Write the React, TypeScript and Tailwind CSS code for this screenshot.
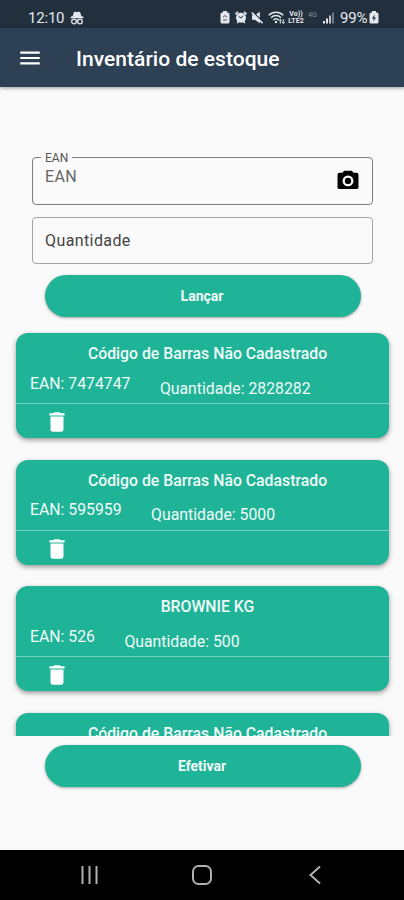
import type { ReactNode } from "react";
import { MdDelete, MdMenu } from "react-icons/md";

interface StockItem {
  name: string;
  ean?: string;
  quantity?: string;
}

const ITEMS: StockItem[] = [
  { name: "Código de Barras Não Cadastrado", ean: "7474747", quantity: "2828282" },
  { name: "Código de Barras Não Cadastrado", ean: "595959", quantity: "5000" },
  { name: "BROWNIE KG", ean: "526", quantity: "500" },
  { name: "Código de Barras Não Cadastrado" },
];

function IncognitoIcon() {
  return (
    <svg width="14" height="14" viewBox="0 0 14 14" fill="currentColor">
      <path d="M3.8 1.4c.3-.8 1-.9 1.7-.6.9.4 2.1.4 3 0 .7-.3 1.400-.2 1.700.6l1.100 3.600L13.500 6v1.200H.5V6l2.200-1z" />
      <g fill="none" stroke="currentColor" strokeWidth="1.300">
        <circle cx="4" cy="10.500" r="2.300" />
        <circle cx="10" cy="10.500" r="2.300" />
        <path d="M6.100 10c.5-.5 1.300-.5 1.800 0" />
      </g>
    </svg>
  );
}

function BatteryIcon() {
  return (
    <svg width="10" height="13" viewBox="0 0 10 13">
      <path d="M3 0h4v1.400h1A1.500 1.500 0 0 1 9.500 2.900v8.200A1.500 1.500 0 0 1 8 12.600H2A1.500 1.500 0 0 1 .5 11.100V2.900A1.500 1.500 0 0 1 2 1.400h1z" fill="currentColor" />
      <path d="M5.600 3.600 3 7.400h1.700L4.400 10.400 7 6.600H5.300z" fill="#22303e" />
    </svg>
  );
}

function SaverIcon() {
  return (
    <svg width="10" height="13" viewBox="0 0 10 13">
      <path d="M3 0h4v1.400h1A1.500 1.500 0 0 1 9.500 2.900v8.200A1.500 1.500 0 0 1 8 12.600H2A1.500 1.500 0 0 1 .5 11.100V2.900A1.500 1.500 0 0 1 2 1.400h1z" fill="currentColor" />
      <path d="M3 6.300 5 4.500l2 1.800M3.200 9h3.600" fill="none" stroke="#22303e" strokeWidth=".8" />
    </svg>
  );
}

function AlarmIcon() {
  return (
    <svg width="12" height="13" viewBox="0 0 12 13">
      <path d="M.5 3.300 3 .9M11.500 3.300 9 .9M2.200 12l1.300-1.500M9.800 12l-1.300-1.500" stroke="currentColor" strokeWidth="1.800" />
      <circle cx="6" cy="6.700" r="5" fill="currentColor" />
      <path d="M3.600 5.200 6 7.200l2-2.500" fill="none" stroke="#22303e" strokeWidth="1" />
    </svg>
  );
}

function MuteIcon() {
  return (
    <svg width="13" height="13" viewBox="0 0 13 13">
      <path d="M1 4.200h2.800L8.800.8v11.400L3.800 8.800H1z" fill="currentColor" />
      <path d="M1.600.7 12.200 11" stroke="#22303e" strokeWidth="1.200" />
      <path d="M.8 1.600 11.600 12.200" stroke="currentColor" strokeWidth="1.600" />
    </svg>
  );
}

function WifiIcon() {
  return (
    <svg width="17" height="13" viewBox="0 0 17 13" fill="none" stroke="currentColor" strokeWidth="1.500">
      <path d="M.8 4.300c4-4 10.400-4 14.400 0M3 6.700c2.800-2.800 7.200-2.800 10 0M5.300 9c1.600-1.500 3.800-1.500 5.400 0" />
      <circle cx="8" cy="11" r="1.200" fill="currentColor" stroke="none" />
      <path d="M12.300 12.500V8.500M11 9.800l1.300-1.500 1.300 1.500M15.300 8.200v4M14 11l1.300 1.400L16.600 11" strokeWidth="1" />
    </svg>
  );
}

function SignalIcon() {
  return (
    <svg width="11" height="12" viewBox="0 0 11 12" fill="currentColor">
      <path d="M0 9h2v2.500H0zM3 6.500h2v5H3z" />
      <path d="M6 3.500h2v8H6z" opacity=".8" />
      <path d="M9 .5h2v11H9z" opacity=".4" />
    </svg>
  );
}

function CameraIcon() {
  return (
    <svg width="22" height="20" viewBox="0 0 22 20">
      <path d="M7.200.8h7.600l1.800 2h3A1.900 1.900 0 0 1 21.500 4.700v12.500a1.900 1.900 0 0 1-1.900 1.900H2.400a1.900 1.900 0 0 1-1.900-1.900V4.700a1.900 1.900 0 0 1 1.900-1.900h3z" fill="#050505" />
      <circle cx="11" cy="10.900" r="4.300" fill="none" stroke="#fafafa" strokeWidth="2.300" />
    </svg>
  );
}

function StatusBar() {
  return (
    <div className="flex h-7 shrink-0 items-center bg-[#22303e] pt-[7px] pl-7 text-[#e4e8ec]">
      <span className="w-[42px] text-[15px] leading-5 tracking-[-0.2px]">12:10</span>
      <IncognitoIcon />
      <div className="ml-[136px] flex items-center">
        <SaverIcon />
        <span className="ml-[5px]"><AlarmIcon /></span>
        <span className="ml-1"><MuteIcon /></span>
        <span className="ml-[4px]"><WifiIcon /></span>
        <span className="ml-[3px] flex w-4 flex-col items-center text-[7px] leading-[7px] font-bold">
          <span>Vo))</span>
          <span>LTE2</span>
        </span>
        <span className="ml-[4px] mb-[5px] w-[11px] text-[7px] leading-2 opacity-50">4G</span>
        <span className="ml-[4px]"><SignalIcon /></span>
      </div>
      <span className="ml-[6px] w-[29px] text-[15px] leading-5 tracking-[-0.2px]">99%</span>
      <BatteryIcon />
    </div>
  );
}

function Header() {
  return (
    <header className="z-10 flex h-[59px] shrink-0 items-center bg-[#2e4053] pt-px pl-[17px] text-white shadow-[0_1px_4px_rgba(0,0,0,0.4)]">
      <MdMenu className="size-[26px]" />
      <h1 className="ml-[33px] pt-[3px] text-[21px] font-medium tracking-[0.03px]">Inventário de estoque</h1>
    </header>
  );
}

function PillButton({ children }: { children: ReactNode }) {
  return (
    <button className="ml-[44.5px] block h-[42px] w-[316px] shrink-0 rounded-full bg-[#1fb397] pt-px pr-[1px] text-[14px] font-bold text-[#f2fbf9] shadow-[0_1px_3px_rgba(0,0,0,0.35)]">
      {children}
    </button>
  );
}

function ItemCard({ name, ean, quantity }: StockItem) {
  return (
    <div className="h-[105px] shrink-0 rounded-xl bg-[#1fb397] pt-[11px] text-[#f0fbf8] shadow-[0_2px_5px_rgba(0,0,0,0.4)]">
      <p className="pl-9 pr-[26px] text-center text-[15.8px] leading-5 font-medium">{name}</p>
      {ean && (
        <>
          <div className="flex h-[39px] gap-[29.5px] pt-[9.5px] pl-[14px] text-[15.8px] leading-5">
            <span>EAN: {ean}</span>
            <span className="pt-[5px]">Quantidade: {quantity}</span>
          </div>
          <div className="border-t border-white/40 pt-[5px] pl-7">
            <MdDelete className="size-[26px] text-white" />
          </div>
        </>
      )}
    </div>
  );
}

function NavBar() {
  return (
    <div className="flex h-[50px] shrink-0 items-center bg-black pl-20 text-[#b0b0b0]">
      <svg width="20" height="20" viewBox="0 0 20 20" fill="none" stroke="currentColor" strokeWidth="2">
        <path d="M2.500 1v18M9.500 1v18M16.500 1v18" />
      </svg>
      <svg className="ml-[92px]" width="20" height="20" viewBox="0 0 20 20" fill="none" stroke="currentColor" strokeWidth="2">
        <rect x="1" y="1" width="18" height="18" rx="5.500" />
      </svg>
      <svg className="ml-[93px]" width="20" height="20" viewBox="0 0 20 20" fill="none" stroke="currentColor" strokeWidth="2">
        <path d="M15 1.500 5.500 10l9.500 8.500" />
      </svg>
    </div>
  );
}

export default function App() {
  return (
    <div className="flex h-[900px] w-[404px] flex-col overflow-hidden bg-[#fafafa] font-[Roboto,sans-serif]">
      <StatusBar />
      <Header />
      <main className="flex min-h-0 flex-1 flex-col pt-[63px]">
        <div className="flex flex-col gap-3 pr-[31px] pl-8">
          <fieldset className="flex h-[55px] rounded-[4px] border border-[#7d7d7d] pr-[13px] pl-2 text-[#555]">
            <legend className="px-1 text-[12px] leading-[14px]"><span className="relative top-px">EAN</span></legend>
            <span className="pt-[3px] pl-1 text-[16px] leading-5 tracking-[0.3px] text-[#666]">EAN</span>
            <span className="mt-[6px] ml-auto"><CameraIcon /></span>
          </fieldset>
          <div className="flex h-[47px] items-center rounded-[4px] border border-[#a5a5a5] px-3 text-[16px] tracking-[0.4px] text-[#444]">
            Quantidade
          </div>
        </div>
        <div className="pt-[11px]">
          <PillButton>Lançar</PillButton>
        </div>
        <div className="flex h-[419px] shrink-0 flex-col gap-[21.5px] overflow-hidden pt-4 pr-[15px] pl-4">
          {ITEMS.map((item, idx) => (
            <ItemCard key={idx} {...item} />
          ))}
        </div>
        <div className="pt-[8.5px]">
          <PillButton>Efetivar</PillButton>
        </div>
      </main>
      <NavBar />
    </div>
  );
}
